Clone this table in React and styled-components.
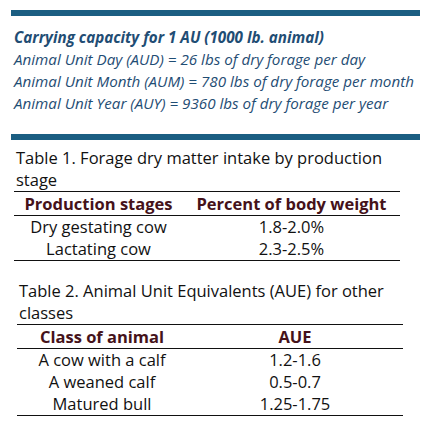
import React from 'react';
import styled, { createGlobalStyle } from 'styled-components';

const GlobalStyle = createGlobalStyle`
  body {
    margin: 0;
    padding: 0;
    background: #ffffff;
    font-family: "Open Sans", "Liberation Sans", sans-serif;
  }
`;

const Page = styled.div`
  width: 427px;
  height: 423px;
  overflow: hidden;
  padding: 10px 7px 0 11px;
  box-sizing: border-box;
`;

const Bar = styled.div`
  height: 6px;
  background: #1b5e82;
`;

const Callout = styled.div`
  padding: 10px 0 20px 3px;
  color: #1f4d74;
  font-style: italic;
  font-size: 15.2px;
  line-height: 22px;
`;

const CalloutTitle = styled.div`
  font-weight: 700;
`;

const Section = styled.div`
  margin: ${props => props.$top}px 0 0 ${props => props.$left}px;
  width: 386px;
`;

const Caption = styled.div`
  padding-left: 2px;
  font-size: 16.5px;
  line-height: 22px;
  color: #111;
`;

const Table = styled.table`
  width: 100%;
  border-collapse: collapse;
  border-top: 1px solid #111;
  border-bottom: 1px solid #111;
  font-size: 16.5px;
  color: #111;
`;

const Th = styled.th`
  width: ${props => props.$w}px;
  padding: 0;
  height: 23px;
  font-weight: 700;
  color: #45121a;
  border-bottom: 1px solid #111;
  text-align: center;
`;

const Td = styled.td`
  padding: 0;
  height: 22px;
  text-align: center;
  line-height: 22px;
`;

const table1 = [
  ['Dry gestating cow', '1.8-2.0%'],
  ['Lactating cow', '2.3-2.5%'],
];

const table2 = [
  ['A cow with a calf', '1.2-1.6'],
  ['A weaned calf', '0.5-0.7'],
  ['Matured bull', '1.25-1.75'],
];

const App = () => {
  return (
    <>
      <GlobalStyle />
      <Page>
        <Bar />
        <Callout>
          <CalloutTitle>Carrying capacity for 1 AU (1000 lb. animal)</CalloutTitle>
          <div>Animal Unit Day (AUD) = 26 lbs of dry forage per day</div>
          <div>Animal Unit Month (AUM) = 780 lbs of dry forage per month</div>
          <div>Animal Unit Year (AUY) = 9360 lbs of dry forage per year</div>
        </Callout>
        <Bar />
        <Section $top={7} $left={3}>
          <Caption>Table 1. Forage dry matter intake by production stage</Caption>
          <Table>
            <thead>
              <tr>
                <Th $w={169}>Production stages</Th>
                <Th>Percent of body weight</Th>
              </tr>
            </thead>
            <tbody>
              {table1.map(r => (
                <tr key={r[0]}>
                  <Td>{r[0]}</Td>
                  <Td>{r[1]}</Td>
                </tr>
              ))}
            </tbody>
          </Table>
        </Section>
        <Section $top={19} $left={6}>
          <Caption>Table 2. Animal Unit Equivalents (AUE) for other classes</Caption>
          <Table>
            <thead>
              <tr>
                <Th $w={170}>Class of animal</Th>
                <Th>AUE</Th>
              </tr>
            </thead>
            <tbody>
              {table2.map(r => (
                <tr key={r[0]}>
                  <Td>{r[0]}</Td>
                  <Td>{r[1]}</Td>
                </tr>
              ))}
            </tbody>
          </Table>
        </Section>
      </Page>
    </>
  );
};

export default App;
